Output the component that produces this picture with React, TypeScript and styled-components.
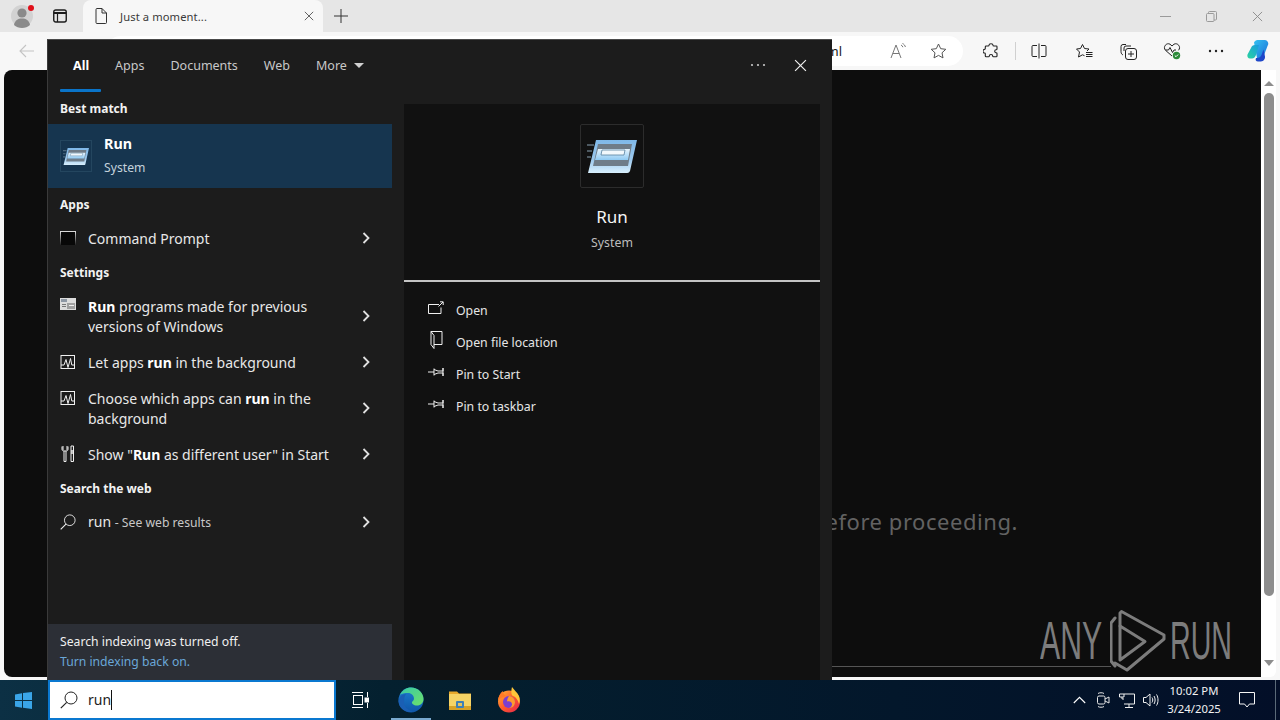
import React from "react";
import styled, { createGlobalStyle } from "styled-components";

const Global = createGlobalStyle`
  html, body { margin: 0; padding: 0; width: 1280px; height: 720px; overflow: hidden; background: #f7f7f7; }
  * { box-sizing: border-box; }
  body { font-family: "Noto Sans", "Open Sans", sans-serif; }
`;

const Page = styled.div`
  position: relative;
  width: 1280px;
  height: 720px;
  display: flex;
  flex-direction: column;
`;

const Browser = styled.div`
  height: 680px;
  display: flex;
  flex-direction: column;
  background: #f7f7f7;
`;

const TabStrip = styled.div`
  height: 32px;
  background: #e6e6e6;
  display: flex;
  align-items: stretch;
`;

const ProfileSlot = styled.div`
  position: relative;
  width: 44px;
  display: flex;
  align-items: center;
  justify-content: center;
`;

const RedDot = styled.span`
  position: absolute;
  left: 28px;
  top: 5px;
  width: 6px;
  height: 6px;
  border-radius: 50%;
  background: #e0101a;
`;

const StripButton = styled.div<{ $w: number }>`
  width: ${(p) => p.$w}px;
  display: flex;
  align-items: center;
  justify-content: center;
  flex: none;
`;

const ActiveTab = styled.div`
  width: 240px;
  background: #f7f7f7;
  border-radius: 8px 8px 0 0;
  display: flex;
  align-items: center;
  padding: 0 9px 0 12px;
  font-size: 11.2px;
  color: #3a3a3a;
  letter-spacing: 0.1px;
`;

const TabTitle = styled.span`
  flex: 1;
  margin-left: 13px;
`;

const StripSpacer = styled.div`
  flex: 1;
`;

const Toolbar = styled.div`
  height: 38px;
  display: flex;
  align-items: center;
`;

const AddressPill = styled.div`
  width: 857px;
  height: 30px;
  margin-left: 106px;
  background: #fff;
  border-radius: 15px;
  display: flex;
  align-items: center;
  justify-content: flex-end;
  font-size: 13px;
  color: #222;
  flex: none;
`;

const UrlText = styled.span`
  margin-right: 36px;
`;

const PillIcon = styled.div<{ $w: number }>`
  width: ${(p) => p.$w}px;
  display: flex;
  justify-content: center;
  align-items: center;
  flex: none;
`;

const BackSlot = styled.div`
  width: 54px;
  display: flex;
  align-items: center;
  justify-content: center;
  flex: none;
  margin-right: -54px;
`;

const ToolGroup = styled.div`
  flex: 1;
  display: flex;
  align-items: center;
  padding-left: 6px;
`;

const ToolBtn = styled.div<{ $w: number }>`
  width: ${(p) => p.$w}px;
  display: flex;
  align-items: center;
  justify-content: center;
  flex: none;
`;

const ToolDivider = styled.div`
  width: 1px;
  height: 18px;
  background: #d0d0d0;
  margin: 0 2px;
  flex: none;
`;

const ContentRow = styled.div`
  flex: 1;
  display: flex;
  padding-left: 4px;
  min-height: 0;
`;

const PageBody = styled.div`
  width: 1257px;
  height: 607px;
  background: #0d0d0d;
  border-radius: 8px 0 0 8px;
  display: flex;
  flex-direction: column;
  align-items: flex-end;
`;

const Notice = styled.div`
  margin-top: 437px;
  margin-right: 243px;
  font-size: 22px;
  line-height: 28px;
  color: #626262;
  letter-spacing: 0.55px;
  white-space: nowrap;
`;

const BottomRule = styled.div`
  margin-top: 131px;
  width: 429px;
  margin-right: 150px;
  height: 1px;
  background: #555;
`;

const Track = styled.div`
  width: 15px;
  height: 607px;
  background: #fff;
  border-radius: 0 0 6px 0;
  display: flex;
  flex-direction: column;
  align-items: center;
  padding-top: 11px;
`;

const ArrowUp = styled.div`
  width: 0;
  height: 0;
  border-left: 5px solid transparent;
  border-right: 5px solid transparent;
  border-bottom: 5px solid #8d8d8d;
`;

const ArrowDown = styled.div`
  width: 0;
  height: 0;
  border-left: 5px solid transparent;
  border-right: 5px solid transparent;
  border-top: 6px solid #8d8d8d;
  margin-top: 64px;
`;

const Thumb = styled.div`
  width: 10px;
  height: 503px;
  margin-top: 7px;
  border-radius: 5px;
  background: #8d8d8d;
`;

const Watermark = styled.div`
  position: absolute;
  left: 1040px;
  top: 608px;
  height: 64px;
  display: flex;
  align-items: center;
  color: #7c7c7c;
  font-family: "Liberation Sans", sans-serif;
  font-size: 53px;
`;

const WatermarkWord = styled.span<{ $w: number; $sx: number }>`
  display: inline-block;
  width: ${(p) => p.$w}px;
  padding-top: 2px;
  line-height: 64px;
  white-space: nowrap;
  transform-origin: left center;
  transform: scaleX(${(p) => p.$sx});
`;

const LogoSlot = styled.div`
  width: 60px;
  flex: none;
  display: flex;
  align-items: flex-start;
  height: 64px;
`;

/* ---------- Search panel ---------- */

const SearchPanel = styled.div`
  position: absolute;
  left: 47px;
  top: 39px;
  width: 785px;
  height: 641px;
  background: #1c1c1c;
  border: 1px solid #3a3a3a;
  border-bottom: 0;
  border-right: 0;
  border-top-color: #4a4a4a;
  display: flex;
  flex-direction: column;
  color: #fff;
`;

const TabsBar = styled.div`
  height: 52px;
  display: flex;
  align-items: stretch;
  padding: 0 11px 0 12px;
  background: #1c1c1c;
`;

const ScopeTab = styled.div<{ $active?: boolean }>`
  position: relative;
  display: flex;
  align-items: center;
  gap: 7px;
  padding: 0 13px 2px;
  font-size: 12.5px;
  font-weight: ${(p) => (p.$active ? 700 : 400)};
  color: ${(p) => (p.$active ? "#fff" : "#c8c8c8")};
`;

const TabMark = styled.span`
  position: absolute;
  left: 0;
  bottom: 0;
  width: 41px;
  height: 3px;
  background: #0a74c9;
  border-radius: 1px;
`;

const Caret = styled.span`
  width: 0;
  height: 0;
  border-left: 5px solid transparent;
  border-right: 5px solid transparent;
  border-top: 5px solid #d0d0d0;
`;

const TabsSpacer = styled.div`
  flex: 1;
`;

const PanelBtn = styled.div`
  width: 42px;
  padding-bottom: 2px;
  display: flex;
  align-items: center;
  justify-content: center;
  flex: none;
`;

const PanelBody = styled.div`
  flex: 1;
  min-height: 0;
  display: flex;
`;

const LeftCol = styled.div`
  width: 344px;
  display: flex;
  flex-direction: column;
`;

const SectionHead = styled.div`
  height: 32px;
  padding-left: 12px;
  display: flex;
  align-items: center;
  font-size: 12px;
  font-weight: 700;
  color: #f2f2f2;
`;

const BestRow = styled.div`
  height: 64px;
  background: #16354f;
  display: flex;
  align-items: center;
  padding-left: 12px;
`;

const BestIcon = styled.div`
  width: 32px;
  height: 32px;
  border: 1px solid #24465f;
  display: flex;
  align-items: center;
  justify-content: center;
  flex: none;
`;

const BestText = styled.div`
  margin-left: 12px;
  display: flex;
  flex-direction: column;
`;

const BestTitle = styled.span`
  font-size: 14.3px;
  font-weight: 700;
  line-height: 24px;
  color: #fff;
`;

const BestSub = styled.span`
  font-size: 12.2px;
  line-height: 24px;
  color: #c4d2dc;
`;

const ResultRow = styled.div<{ $h?: number }>`
  height: ${(p) => p.$h ?? 36}px;
  display: flex;
  align-items: center;
  padding-left: 12px;
`;

const ResultIcon = styled.div`
  width: 16px;
  height: 100%;
  flex: none;
  display: flex;
  padding-top: 10px;
  justify-content: center;
`;

const ResultIconCentered = styled(ResultIcon)`
  padding-top: 0;
  align-items: center;
`;

const ResultText = styled.div`
  flex: 1;
  margin-left: 12px;
  padding-top: 1px;
  font-size: 14px;
  line-height: 20px;
  color: #e8e8e8;
  b {
    color: #fff;
    font-weight: 700;
  }
`;

const TextLine = styled.div`
  white-space: nowrap;
`;

const Muted = styled.span`
  font-size: 12.2px;
  color: #c8c8c8;
`;

const Chevron = styled.div`
  width: 52px;
  flex: none;
  display: flex;
  justify-content: center;
`;

const ColSpacer = styled.div`
  flex: 1;
`;

const IndexNote = styled.div`
  height: 56px;
  background: #2c2f36;
  padding: 8px 12px 0;
  font-size: 12.2px;
  line-height: 20px;
  color: #f0f0f0;
`;

const IndexLink = styled.div`
  color: #6aa7d8;
`;

const RightCol = styled.div`
  width: 416px;
  margin-left: 12px;
  margin-top: 12px;
  background: #111111;
  display: flex;
  flex-direction: column;
`;

const Hero = styled.div`
  height: 178px;
  border-bottom: 2px solid #c4c4c4;
  display: flex;
  flex-direction: column;
  align-items: center;
  padding-top: 20px;
`;

const HeroIcon = styled.div`
  width: 64px;
  height: 64px;
  border: 1px solid #2c2c2c;
  border-radius: 2px;
  display: flex;
  align-items: center;
  justify-content: center;
`;

const HeroTitle = styled.div`
  margin-top: 16px;
  font-size: 17px;
  line-height: 26px;
  color: #f5f5f5;
`;

const HeroSub = styled.div`
  font-size: 12.3px;
  line-height: 26px;
  color: #bdbdbd;
`;

const Actions = styled.div`
  padding: 12px 0 0 24px;
  display: flex;
  flex-direction: column;
`;

const ActionRow = styled.div`
  height: 32px;
  display: flex;
  align-items: center;
  font-size: 12.3px;
  color: #e6e6e6;
`;

const ActionIcon = styled.div`
  width: 16px;
  margin-right: 12px;
  margin-top: -4px;
  display: flex;
  justify-content: center;
  flex: none;
`;

/* ---------- Taskbar ---------- */

const Taskbar = styled.div`
  height: 40px;
  background: linear-gradient(90deg, #0c3044 0%, #04202f 30%, #03172b 70%, #030f28 100%);
  display: flex;
  align-items: stretch;
  color: #fff;
`;

const StartBtn = styled.div`
  width: 48px;
  padding-right: 1px;
  display: flex;
  align-items: center;
  justify-content: center;
  flex: none;
`;

const SearchBox = styled.div`
  width: 288px;
  background: #fff;
  border: 2px solid #0a78d0;
  display: flex;
  align-items: center;
  padding-left: 10px;
  color: #222;
  font-size: 14px;
  flex: none;
`;

const SearchValue = styled.span`
  margin-left: 10px;
  border-right: 1px solid #111;
  line-height: 20px;
`;

const BarSlot = styled.div<{ $w: number; $ml?: number; $on?: boolean }>`
  width: ${(p) => p.$w}px;
  margin-left: ${(p) => p.$ml ?? 0}px;
  display: flex;
  align-items: center;
  justify-content: center;
  flex: none;
  box-shadow: ${(p) => (p.$on ? "inset 0 -2px 0 #79a9cf" : "none")};
`;

const BarGrow = styled.div`
  flex: 1;
`;

const Clock = styled.div`
  width: 58px;
  margin-left: 2px;
  flex: none;
  display: flex;
  flex-direction: column;
  align-items: center;
  justify-content: center;
  font-size: 11.3px;
  line-height: 18px;
  color: #f2f2f2;
  white-space: nowrap;
`;

const PeekEdge = styled.div`
  width: 5px;
  margin-left: 4px;
  flex: none;
  border-left: 1px solid #5a6a78;
`;

/* ---------- Icons ---------- */

const Avatar = () => (
  <svg width="22" height="24" viewBox="0 0 22 24">
    <circle cx="11" cy="12" r="11" fill="#d2d2d2" />
    <circle cx="11" cy="9" r="4.6" fill="#8a8a8a" />
    <path d="M3 21c1-5 4-6.5 8-6.5s7 1.500 8 6.500c-2 1.800-5 3-8 3s-6-1.200-8-3z" fill="#8a8a8a" />
  </svg>
);

const VerticalTabs = () => (
  <svg width="14" height="14" viewBox="0 0 14 14" fill="none" stroke="#1c1c1c">
    <rect x="0.75" y="1" width="12.5" height="12" rx="2" strokeWidth="1.400" />
    <path d="M1 4h12" strokeWidth="2" />
    <path d="M4.500 4v9" strokeWidth="1.200" />
  </svg>
);

const DocIcon = () => (
  <svg width="12" height="16" viewBox="0 0 12 16" fill="none" stroke="#333">
    <path d="M1 1.500a1 1 0 0 1 1-1h5l4.500 4.500v9.500a1 1 0 0 1-1 1H2a1 1 0 0 1-1-1z" />
    <path d="M7 .5V5h4.500" />
  </svg>
);

const CloseX = ({ size, color, width = 1 }: { size: number; color: string; width?: number }) => (
  <svg width={size} height={size} viewBox="0 0 12 12" fill="none" stroke={color} strokeWidth={width}>
    <path d="M1 1l10 10M11 1L1 11" />
  </svg>
);

const Plus = () => (
  <svg width="14" height="14" viewBox="0 0 14 14" stroke="#333" strokeWidth="1">
    <path d="M7 0v14M0 7h14" />
  </svg>
);

const WinMin = () => (
  <svg width="11" height="11" viewBox="0 0 11 11" stroke="#9a9a9a">
    <path d="M0 5.500h11" />
  </svg>
);

const WinRestore = () => (
  <svg width="11" height="11" viewBox="0 0 11 11" fill="none" stroke="#9a9a9a">
    <rect x="0.500" y="2.500" width="7.500" height="8" rx="1" />
    <path d="M2.500 2.500V1.500a1 1 0 0 1 1-1h6a1 1 0 0 1 1 1V8a1 1 0 0 1-1 1H8" />
  </svg>
);

const BackArrow = () => (
  <svg width="16" height="14" viewBox="0 0 16 14" fill="none" stroke="#c4c4c4" strokeWidth="1.100">
    <path d="M15 7H1M7 1L1 7l6 6" />
  </svg>
);

const ReadAloud = () => (
  <svg width="17" height="16" viewBox="0 0 17 16" fill="none" stroke="#777" strokeWidth="1">
    <path d="M1 15L6 2l5 13M2.800 10.500h6.400" />
    <path d="M11 2c1 .4 1.600 1.200 1.900 2.200M12.500 0.500c1.500.6 2.500 2 2.900 3.500" />
  </svg>
);

const StarLine = () => (
  <svg width="17" height="16" viewBox="0 0 17 16" fill="none" stroke="#555" strokeWidth="1">
    <path d="M8.500 1l2.200 4.700 5.100.6-3.800 3.500 1 5.100-4.500-2.500-4.500 2.500 1-5.100L1.200 6.300l5.100-.6z" />
  </svg>
);

const Puzzle = () => (
  <svg width="16" height="16" viewBox="0 0 16 16" fill="none" stroke="#222" strokeWidth="1.100">
    <path d="M6 2.200c0-2 4-2 4 0 0 .6.500.8 1 .8h2.300c.4 0 .7.300.7.700v2.200c0 .6-.5.800-1 .8-1.700 0-1.700 3 0 3 .5 0 1 .3 1 .8v2.500c0 .5-.3.800-.8.800H10.500c-.5 0-.8-.4-.8-.9 0-1.800-3.400-1.800-3.400 0 0 .5-.3.900-.8.900H3.200c-.5 0-.9-.3-.9-.8v-2.200c0-.5-.3-.8-.8-.8-2 0-2-3.600 0-3.600.5 0 .8-.4.800-.9V3.800C2.300 3.300 2.700 3 3.200 3H5c.5 0 1-.3 1-.8z" />
  </svg>
);

const SplitScreen = () => (
  <svg width="16" height="16" viewBox="0 0 16 16" fill="none" stroke="#222" strokeWidth="1">
    <path d="M6 2.500H2a1 1 0 0 0-1 1v9a1 1 0 0 0 1 1h4M10 2.500h4a1 1 0 0 1 1 1v9a1 1 0 0 1-1 1h-4M8 .5v15" />
  </svg>
);

const FavList = () => (
  <svg width="17" height="16" viewBox="0 0 17 16" fill="none" stroke="#222" strokeWidth="1">
    <path d="M6.500 1.500L8.500 5.500 13 6l-2 2M6.500 1.500L4.500 5.500.5 6l3 3-1 5 4-2.200 2 .9" />
    <path d="M10 9.500h6.500M10 11.500h6.500M10 13.500h6.500" />
  </svg>
);

const Collections = () => (
  <svg width="17" height="17" viewBox="0 0 17 17" fill="none" stroke="#222" strokeWidth="1">
    <path d="M6 1.500H3a2 2 0 0 0-2 2v5c0 2 1 3 2 3.500" />
    <path d="M11 3H6a2 2 0 0 0-2 2v3" />
    <rect x="5.500" y="5.500" width="11" height="11" rx="2.500" />
    <path d="M11 8v6M8 11h6" />
  </svg>
);

const Health = () => (
  <svg width="18" height="18" viewBox="0 0 18 18" fill="none">
    <path d="M9 14L2.500 8.300C-.5 5 3.500 .2 7 2.200L9 4l2-1.800c3.500-2 7.500 2.800 4.500 6.100" stroke="#222" strokeWidth="1" />
    <path d="M2.500 8h3l1.500-2.500 2.500 5 1.500-2.500h2" stroke="#222" strokeWidth="1" />
    <circle cx="13.500" cy="13.500" r="3.700" fill="#2d8a3a" />
    <path d="M11.800 13.500l1.200 1.200 2.200-2.200" stroke="#fff" strokeWidth="1" />
  </svg>
);

const Dots = ({ color, gap = 6, r = 1.200 }: { color: string; gap?: number; r?: number }) => (
  <svg width={gap * 2 + 6} height="6" viewBox={`0 0 ${gap * 2 + 6} 6`} fill={color}>
    <circle cx="3" cy="3" r={r} />
    <circle cx={3 + gap} cy="3" r={r} />
    <circle cx={3 + gap * 2} cy="3" r={r} />
  </svg>
);

const Copilot = () => (
  <svg width="24" height="24" viewBox="0 0 24 24">
    <defs>
      <linearGradient id="cpA" x1="0" y1="0" x2="1" y2="1">
        <stop offset="0" stopColor="#35c1f1" />
        <stop offset="1" stopColor="#1a6fd8" />
      </linearGradient>
      <linearGradient id="cpB" x1="0" y1="1" x2="1" y2="0">
        <stop offset="0" stopColor="#2bd4a0" />
        <stop offset="1" stopColor="#1a9be0" />
      </linearGradient>
    </defs>
    <path d="M8 3.500C9 1.500 10.500 1 12.500 1h6c2.500 0 3.800 2 3.800 4L18 16c-.8 2-2.300 3-4.500 3H11z" fill="url(#cpA)" />
    <path d="M5 9c.6-2 2-3 4-3h4l-3 10c-.6 1.900-2 3.500-4 3.500H4C2 19.500.8 17.500 1.500 15.500z" fill="url(#cpB)" />
    <path d="M10 19c2.500 0 4.500-.5 5.500-3l2-5.500 1.500 7c.3 2-1.300 5-4 5h-3c-2 0-3-1.500-2-3.500z" fill="#1f47c9" />
  </svg>
);

const Logo = () => (
  <svg width="56" height="64" viewBox="0 0 56 64" fill="none" stroke="#7c7c7c" strokeWidth="3" strokeLinejoin="round" strokeLinecap="round">
    <path d="M5 10L1 15v38l4 5" />
    <path d="M10 18V5l1.500-1.500L54 27v4L17 62l-12-7" />
    <path d="M10 18l25 15.500L10 52z" />
  </svg>
);

const RunIcon = ({ size }: { size: number }) => (
  <svg width={size} height={size * 0.72} viewBox="0 0 50 36">
    <defs>
      <linearGradient id={`run${size}`} x1="0" y1="0" x2="0" y2="1">
        <stop offset="0" stopColor="#7fb8e8" />
        <stop offset="0.600" stopColor="#9cc8ec" />
        <stop offset="1" stopColor="#d9f0fd" />
      </linearGradient>
      <linearGradient id={`runIn${size}`} x1="0" y1="0" x2="0" y2="1">
        <stop offset="0" stopColor="#e8f4fc" />
        <stop offset="1" stopColor="#8fcaf3" />
      </linearGradient>
    </defs>
    <path d="M0 7h7M0 13h5M0 19h4" stroke="#8aa0b0" strokeWidth="2" opacity="0.500" />
    <path d="M9 2h41l-7 31a3 3 0 0 1-3 2H1z" fill={`url(#run${size})`} />
    <path d="M11 6h34l-4 22H6z" fill="#6f7c88" />
    <path d="M11 11h32l-2 11H8z" fill={`url(#runIn${size})`} />
    <path d="M15 12h23l-1 5H14z" fill="#f2f8fc" stroke="#57809f" strokeWidth="0.800" />
  </svg>
);

const TermIcon = () => (
  <svg width="16" height="14" viewBox="0 0 16 14">
    <defs>
      <linearGradient id="termEdge" x1="0" y1="0" x2="0" y2="1">
        <stop offset="0" stopColor="#e0e0e0" />
        <stop offset="1" stopColor="#222" />
      </linearGradient>
    </defs>
    <rect width="16" height="14" fill="url(#termEdge)" />
    <rect x="1" y="1" width="14" height="13" fill="#080808" />
  </svg>
);

const LegacyIcon = () => (
  <svg width="16" height="12" viewBox="0 0 16 12">
    <rect width="16" height="12" fill="#dcdcdc" />
    <rect x="1" y="1" width="6" height="3" fill="#8d97a4" />
    <path d="M7 5h8v6H7z" fill="#a0a0a0" />
    <path d="M2 6h4v1H2zM2 8h4v1H2z" fill="#777" />
    <path d="M9 7h5v1H9z" fill="#f0f0f0" />
  </svg>
);

const Activity = () => (
  <svg width="16" height="16" viewBox="0 0 16 16" fill="none" stroke="#f0f0f0" strokeWidth="1">
    <rect x="1" y="1.500" width="13.500" height="13" />
    <path d="M1 11h3l2-5.500 2 8 2.500-9 1.300 6.500h2.700" />
  </svg>
);

const Tools = () => (
  <svg width="16" height="18" viewBox="0 0 16 18" fill="none" stroke="#f0f0f0" strokeWidth="1">
    <path d="M3 1v4M7 1v4M2 1.500v3c0 1 1 1.500 3 1.500s3-.5 3-1.500v-3M4 6v10.500h2V6" />
    <path d="M11 1h2.500v5H11zM11 6h2.500v2H11zM11 8h2.500v8.500H11z" />
  </svg>
);

const Magnifier = ({ color, size = 18 }: { color: string; size?: number }) => (
  <svg width={size} height={size} viewBox="0 0 18 18" fill="none" stroke={color} strokeWidth="1">
    <circle cx="11" cy="7" r="6" />
    <path d="M6.700 11.300L.8 17.200" strokeWidth="1.200" />
  </svg>
);

const ChevronIcon = () => (
  <svg width="8" height="12" viewBox="0 0 8 12" fill="none" stroke="#e0e0e0" strokeWidth="1.800">
    <path d="M1.500 1l5 5-5 5" />
  </svg>
);

const OpenIcon = () => (
  <svg width="16" height="14" viewBox="0 0 16 14" fill="none" stroke="#f0f0f0" strokeWidth="1">
    <path d="M11 3.500H.5v9H13V6.500" />
    <path d="M10.500 5.500L15 1M12 .8h3.200V4" />
  </svg>
);

const FolderIcon = () => (
  <svg width="14" height="18" viewBox="0 0 14 18" fill="none" stroke="#f0f0f0" strokeWidth="1">
    <path d="M2 .5h11v13H5M2 .5v13l3 4V4.500L2 .5z" />
  </svg>
);

const PinIcon = () => (
  <svg width="16" height="10" viewBox="0 0 16 10" fill="none" stroke="#f0f0f0" strokeWidth="1">
    <path d="M0 5h6M6 1.500v7M6 2.500l4 1.500h5V1v8-3h-5L6 7.500" />
  </svg>
);

const WinLogo = () => (
  <svg width="17" height="17" viewBox="0 0 17 17" fill="#3aa5e8">
    <path d="M0 2.400L7 1.300v6.700H0zM8 1.100L17 0v8H8zM0 9h7v6.700L0 14.600zM8 9h9v8l-9-1.200z" />
  </svg>
);

const TaskView = () => (
  <svg width="17" height="16" viewBox="0 0 17 16" fill="none" stroke="#fff" strokeWidth="1">
    <path d="M0 .5h11M0 15.500h11M15.500 0v5M15.500 11v5" />
    <rect x="1.500" y="3.500" width="9" height="9" />
    <rect x="13" y="6" width="3.500" height="4" fill="#fff" />
  </svg>
);

const EdgeLogo = () => (
  <svg width="26" height="26" viewBox="0 0 26 26">
    <defs>
      <linearGradient id="edgeA" x1="0" y1="0" x2="1" y2="1">
        <stop offset="0" stopColor="#37c9a8" />
        <stop offset="1" stopColor="#6ee06a" />
      </linearGradient>
      <linearGradient id="edgeB" x1="0" y1="0" x2="0" y2="1">
        <stop offset="0" stopColor="#1d7fd0" />
        <stop offset="1" stopColor="#0f56a8" />
      </linearGradient>
    </defs>
    <circle cx="13" cy="13" r="12.500" fill="url(#edgeB)" />
    <path d="M2 8C4 3 8.500.5 13 .5c7 0 12.500 5.500 12.500 11.500 0 4-3 6.500-6.500 6.500-3.500 0-5.500-2-5-3.500.3-1 2-1 2-3.500 0-3-2.500-5.500-6-5.500C6.500 6 3.500 6.500 2 8z" fill="url(#edgeA)" />
    <path d="M6 15c0 5 4 8.500 9 9.500-7 2-14-3-14.500-10C1 10 4 7 8 7c-1.500 2-2 5-2 8z" fill="#1a5fb4" />
  </svg>
);

const ExplorerLogo = () => (
  <svg width="24" height="22" viewBox="0 0 24 22">
    <path d="M1 2.500h8l2 2h12v4H1z" fill="#e8a92b" />
    <rect x="1" y="5" width="22" height="16" fill="#f6d365" />
    <rect x="1" y="17" width="22" height="4" fill="#d8a227" />
    <rect x="8" y="12" width="8" height="7" rx="1" fill="#3f80b8" />
    <rect x="10" y="14" width="4" height="3" fill="#e7c35a" />
  </svg>
);

const FirefoxLogo = () => (
  <svg width="24" height="26" viewBox="0 0 24 26">
    <defs>
      <linearGradient id="fxA" x1="0" y1="0" x2="1" y2="1">
        <stop offset="0" stopColor="#ffbb33" />
        <stop offset="0.500" stopColor="#ff5a2b" />
        <stop offset="1" stopColor="#e5224f" />
      </linearGradient>
    </defs>
    <circle cx="12" cy="14.500" r="11" fill="url(#fxA)" />
    <circle cx="12" cy="15" r="6" fill="#7a3fd0" />
    <path d="M12 9a6 6 0 0 1 6 6c0 3-2 6-6 6 3-1 4-4 2-6-1-1-3-1-4-.5 0-2 1-4 2-5.500z" fill="#ff9a2e" />
    <path d="M15 0c2 3 5 5 7 9 1 3 1 6 0 8-1-4-3-7-6-8-2-1-2-5-1-9z" fill="#ffc53a" />
    <path d="M1 14C1 10 3 6 6 4c0 2 1 4 3 5-3 1-6 2-8 5z" fill="#ff7a26" />
  </svg>
);

const TrayUp = () => (
  <svg width="13" height="8" viewBox="0 0 13 8" fill="none" stroke="#fff" strokeWidth="1.100">
    <path d="M.8 7l5.700-5.700L12.200 7" />
  </svg>
);

const MeetIcon = () => (
  <svg width="14" height="18" viewBox="0 0 14 18" fill="none" stroke="#e8e8e8" strokeWidth="1">
    <rect x="1.500" y="5" width="7.500" height="8" rx="1.500" />
    <path d="M9 8l4-2v6l-4-2" />
    <path d="M2 2.500C3 1.500 7 1.500 8 2.500M2 15.500c1 1 5 1 6 0" />
  </svg>
);

const NetIcon = () => (
  <svg width="16" height="15" viewBox="0 0 16 15" fill="none" stroke="#f0f0f0" strokeWidth="1">
    <path d="M5 1h10.500v10H5M5 4H.5V1H5zM3 4v2h2" />
    <path d="M10 11v3M6 14.500h8" />
  </svg>
);

const Speaker = () => (
  <svg width="17" height="14" viewBox="0 0 17 14" fill="none" stroke="#f0f0f0" strokeWidth="1">
    <path d="M.5 4.500h2.500L7 1v12L3 9.500H.5z" />
    <path d="M9 4.500c1 1.500 1 3.500 0 5M11 3c1.500 2.500 1.500 5.500 0 8M13.500 1.500c2 3 2 8 0 11" />
  </svg>
);

const Notify = () => (
  <svg width="16" height="16" viewBox="0 0 16 16" fill="none" stroke="#f5f5f5" strokeWidth="1">
    <path d="M.5.500h15v11.500h-5L8 15l-2.500-3H.5z" />
  </svg>
);

export default function App() {
  return (
    <Page>
      <Global />
      <Browser>
        <TabStrip>
          <ProfileSlot>
            <Avatar />
            <RedDot />
          </ProfileSlot>
          <StripButton $w={32}>
            <VerticalTabs />
          </StripButton>
          <StripButton $w={7} />
          <ActiveTab>
            <DocIcon />
            <TabTitle>Just a moment...</TabTitle>
            <CloseX size={10} color="#444" />
          </ActiveTab>
          <StripButton $w={36}>
            <Plus />
          </StripButton>
          <StripSpacer />
          <StripButton $w={46}>
            <WinMin />
          </StripButton>
          <StripButton $w={46}>
            <WinRestore />
          </StripButton>
          <StripButton $w={46}>
            <CloseX size={11} color="#8a8a8a" />
          </StripButton>
        </TabStrip>
        <Toolbar>
          <BackSlot>
            <BackArrow />
          </BackSlot>
          <AddressPill>
            <UrlText>html</UrlText>
            <PillIcon $w={40}>
              <ReadAloud />
            </PillIcon>
            <PillIcon $w={40}>
              <StarLine />
            </PillIcon>
            <PillIcon $w={5} />
          </AddressPill>
          <ToolGroup>
            <ToolBtn $w={44}>
              <Puzzle />
            </ToolBtn>
            <ToolDivider />
            <ToolBtn $w={42}>
              <SplitScreen />
            </ToolBtn>
            <ToolBtn $w={48}>
              <FavList />
            </ToolBtn>
            <ToolBtn $w={40}>
              <Collections />
            </ToolBtn>
            <ToolBtn $w={48}>
              <Health />
            </ToolBtn>
            <ToolBtn $w={40}>
              <Dots color="#222" gap={6} r={1.200} />
            </ToolBtn>
            <ToolBtn $w={44}>
              <Copilot />
            </ToolBtn>
          </ToolGroup>
        </Toolbar>
        <ContentRow>
          <PageBody>
            <Notice>before proceeding.</Notice>
            <BottomRule />
          </PageBody>
          <Track>
            <ArrowUp />
            <Thumb />
            <ArrowDown />
          </Track>
        </ContentRow>
      </Browser>
      <Watermark>
        <WatermarkWord $w={70} $sx={0.57}>ANY</WatermarkWord>
        <LogoSlot>
          <Logo />
        </LogoSlot>
        <WatermarkWord $w={60} $sx={0.54}>RUN</WatermarkWord>
      </Watermark>
      <SearchPanel>
        <TabsBar>
          <ScopeTab $active>
            All
            <TabMark />
          </ScopeTab>
          <ScopeTab>Apps</ScopeTab>
          <ScopeTab>Documents</ScopeTab>
          <ScopeTab>Web</ScopeTab>
          <ScopeTab>
            More
            <Caret />
          </ScopeTab>
          <TabsSpacer />
          <PanelBtn>
            <Dots color="#c8c8c8" gap={6} r={1.100} />
          </PanelBtn>
          <PanelBtn>
            <CloseX size={13} color="#f0f0f0" width={1.100} />
          </PanelBtn>
        </TabsBar>
        <PanelBody>
          <LeftCol>
            <SectionHead>Best match</SectionHead>
            <BestRow>
              <BestIcon>
                <RunIcon size={26} />
              </BestIcon>
              <BestText>
                <BestTitle>Run</BestTitle>
                <BestSub>System</BestSub>
              </BestText>
            </BestRow>
            <SectionHead>Apps</SectionHead>
            <ResultRow>
              <ResultIconCentered>
                <TermIcon />
              </ResultIconCentered>
              <ResultText>Command Prompt</ResultText>
              <Chevron>
                <ChevronIcon />
              </Chevron>
            </ResultRow>
            <SectionHead>Settings</SectionHead>
            <ResultRow $h={56}>
              <ResultIcon>
                <LegacyIcon />
              </ResultIcon>
              <ResultText>
                <TextLine>
                  <b>Run</b> programs made for previous
                </TextLine>
                <TextLine>versions of Windows</TextLine>
              </ResultText>
              <Chevron>
                <ChevronIcon />
              </Chevron>
            </ResultRow>
            <ResultRow>
              <ResultIconCentered>
                <Activity />
              </ResultIconCentered>
              <ResultText>
                Let apps <b>run</b> in the background
              </ResultText>
              <Chevron>
                <ChevronIcon />
              </Chevron>
            </ResultRow>
            <ResultRow $h={56}>
              <ResultIcon>
                <Activity />
              </ResultIcon>
              <ResultText>
                <TextLine>
                  Choose which apps can <b>run</b> in the
                </TextLine>
                <TextLine>background</TextLine>
              </ResultText>
              <Chevron>
                <ChevronIcon />
              </Chevron>
            </ResultRow>
            <ResultRow>
              <ResultIconCentered>
                <Tools />
              </ResultIconCentered>
              <ResultText>
                Show "<b>Run</b> as different user" in Start
              </ResultText>
              <Chevron>
                <ChevronIcon />
              </Chevron>
            </ResultRow>
            <SectionHead>Search the web</SectionHead>
            <ResultRow>
              <ResultIconCentered>
                <Magnifier color="#f0f0f0" />
              </ResultIconCentered>
              <ResultText>
                run <Muted>- See web results</Muted>
              </ResultText>
              <Chevron>
                <ChevronIcon />
              </Chevron>
            </ResultRow>
            <ColSpacer />
            <IndexNote>
              Search indexing was turned off.
              <IndexLink>Turn indexing back on.</IndexLink>
            </IndexNote>
          </LeftCol>
          <RightCol>
            <Hero>
              <HeroIcon>
                <RunIcon size={50} />
              </HeroIcon>
              <HeroTitle>Run</HeroTitle>
              <HeroSub>System</HeroSub>
            </Hero>
            <Actions>
              <ActionRow>
                <ActionIcon>
                  <OpenIcon />
                </ActionIcon>
                Open
              </ActionRow>
              <ActionRow>
                <ActionIcon>
                  <FolderIcon />
                </ActionIcon>
                Open file location
              </ActionRow>
              <ActionRow>
                <ActionIcon>
                  <PinIcon />
                </ActionIcon>
                Pin to Start
              </ActionRow>
              <ActionRow>
                <ActionIcon>
                  <PinIcon />
                </ActionIcon>
                Pin to taskbar
              </ActionRow>
            </Actions>
          </RightCol>
        </PanelBody>
      </SearchPanel>
      <Taskbar>
        <StartBtn>
          <WinLogo />
        </StartBtn>
        <SearchBox>
          <Magnifier color="#222" />
          <SearchValue>run</SearchValue>
        </SearchBox>
        <BarSlot $w={48}>
          <TaskView />
        </BarSlot>
        <BarSlot $w={40} $ml={7} $on>
          <EdgeLogo />
        </BarSlot>
        <BarSlot $w={40} $ml={9}>
          <ExplorerLogo />
        </BarSlot>
        <BarSlot $w={40} $ml={9}>
          <FirefoxLogo />
        </BarSlot>
        <BarGrow />
        <BarSlot $w={24}>
          <TrayUp />
        </BarSlot>
        <BarSlot $w={24}>
          <MeetIcon />
        </BarSlot>
        <BarSlot $w={24}>
          <NetIcon />
        </BarSlot>
        <BarSlot $w={24}>
          <Speaker />
        </BarSlot>
        <Clock>
          <span>10:02 PM</span>
          <span>3/24/2025</span>
        </Clock>
        <BarSlot $w={48}>
          <Notify />
        </BarSlot>
        <PeekEdge />
      </Taskbar>
    </Page>
  );
}
